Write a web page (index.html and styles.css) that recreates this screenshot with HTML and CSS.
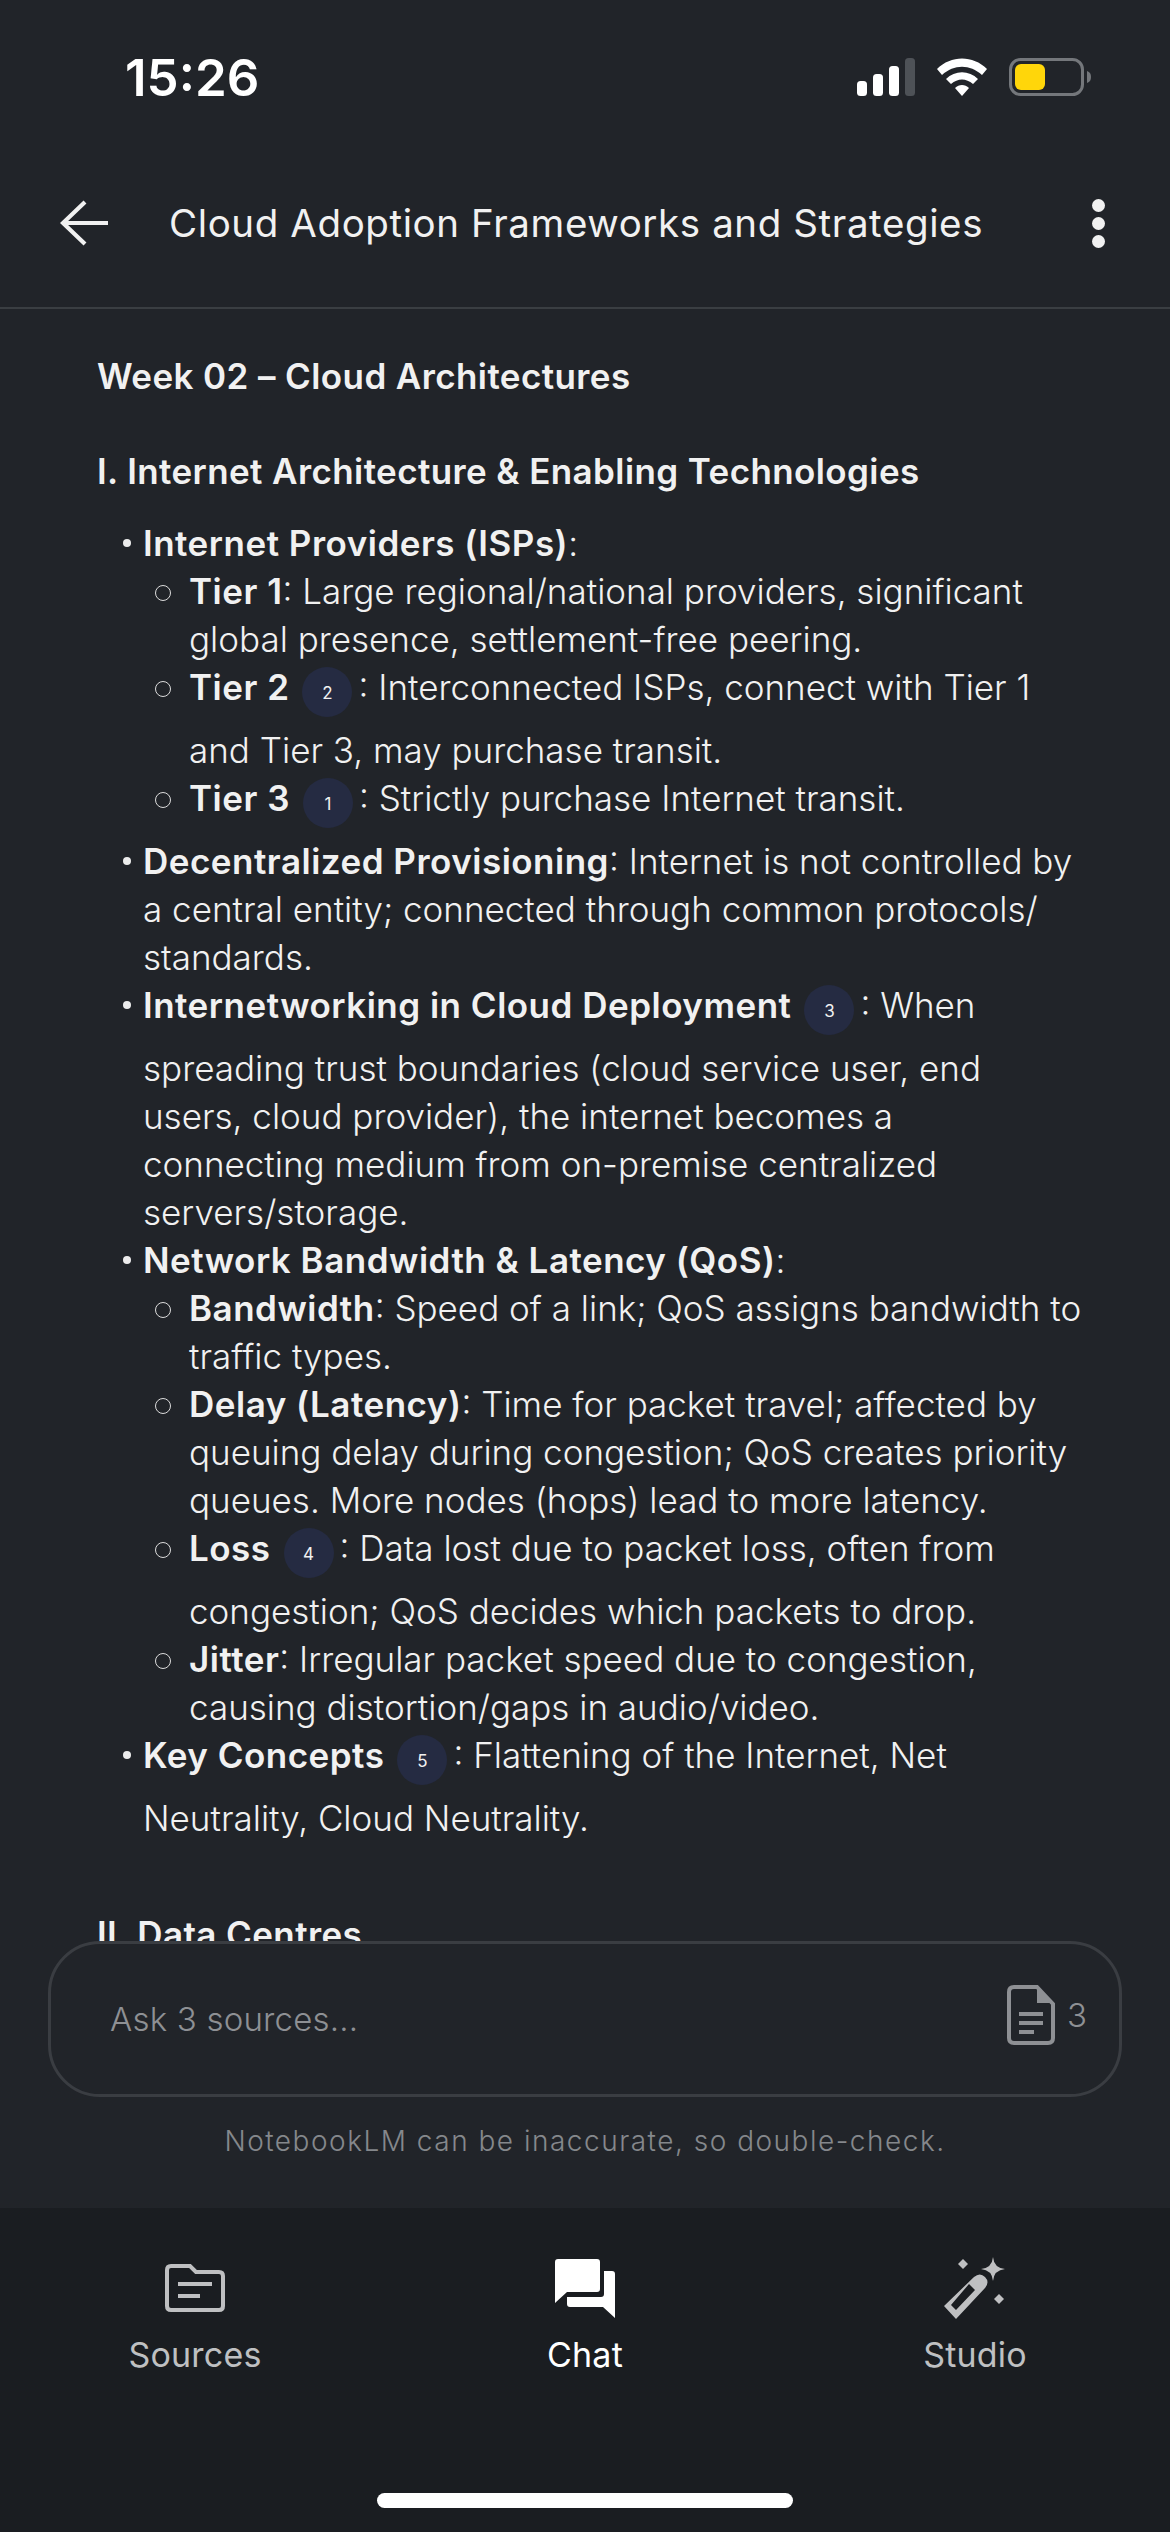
FILE: index.html
```html
<!DOCTYPE html>
<html lang="en">
<head>
    <meta charset="UTF-8">
    <title>Cloud Adoption Frameworks and Strategies</title>
    <meta name="viewport" content="width=device-width, initial-scale=1.0">
    <link rel="stylesheet" href="styles.css">
</head>
<body>
<div class="app">

    <!-- Status bar -->
    <div class="status-bar">
        <span class="time">15:26</span>
        <div class="status-icons">
            <svg width="58" height="38" viewBox="0 0 58 38">
                <rect x="0" y="23" width="10" height="15" rx="3.5" fill="#fff"/>
                <rect x="16" y="16" width="10" height="22" rx="3.5" fill="#fff"/>
                <rect x="32" y="8" width="10" height="30" rx="3.5" fill="#fff"/>
                <rect x="48" y="0" width="10" height="38" rx="3.5" fill="#4e5257"/>
            </svg>
            <svg width="50" height="38" viewBox="0 0 50 38">
                <path d="M0 11 C14 -3 36 -3 50 11 L45 17 C33 6 17 6 5 17 Z" fill="#fff"/>
                <path d="M9 21 C18 12 32 12 41 21 L36 26 C29 20 21 20 14 26 Z" fill="#fff"/>
                <path d="M18 30 C22 26 28 26 32 30 L25 38 Z" fill="#fff"/>
            </svg>
            <svg width="82" height="38" viewBox="0 0 82 38">
                <rect x="1.5" y="1.5" width="72" height="35" rx="10" fill="none" stroke="#74777b" stroke-width="3"/>
                <rect x="6" y="6" width="30" height="26" rx="6" fill="#ffd60a"/>
                <path d="M78 13 C81 14 82 16 82 19 C82 22 81 24 78 25 Z" fill="#74777b"/>
            </svg>
        </div>
    </div>

    <!-- Header -->
    <header class="top-bar">
        <svg class="back" width="50" height="46" viewBox="0 0 50 46">
            <path d="M25 2 L3 23 L25 44 M3 23 H48" fill="none" stroke="#f1f1f1" stroke-width="4.2"/>
        </svg>
        <h1>Cloud Adoption Frameworks and Strategies</h1>
        <div class="more"><i></i><i></i><i></i></div>
    </header>

    <!-- Notes -->
    <main class="note">
        <h2 class="week">Week 02 – Cloud Architectures</h2>
        <h3>I. Internet Architecture &amp; Enabling Technologies</h3>
        <ul class="lvl1">
            <li><b>Internet Providers (ISPs)</b>:
                <ul class="lvl2">
                    <li><b>Tier 1</b>: Large regional/national providers, significant global presence, settlement-free peering.</li>
                    <li><b>Tier 2</b><span class="cite">2</span>: Interconnected ISPs, connect with Tier 1 and Tier 3, may purchase transit.</li>
                    <li><b>Tier 3</b><span class="cite">1</span>: Strictly purchase Internet transit.</li>
                </ul>
            </li>
            <li><b>Decentralized Provisioning</b>: Internet is not controlled by a central entity; connected through common protocols/<br>standards.</li>
            <li><b>Internetworking in Cloud Deployment</b><span class="cite">3</span>: When spreading trust boundaries (cloud service user, end<br>users, cloud provider), the internet becomes a<br>connecting medium from on-premise centralized<br>servers/storage.</li>
            <li><b>Network Bandwidth &amp; Latency (QoS)</b>:
                <ul class="lvl2">
                    <li><b>Bandwidth</b>: Speed of a link; QoS assigns bandwidth to traffic types.</li>
                    <li><b>Delay (Latency)</b>: Time for packet travel; affected by queuing delay during congestion; QoS creates priority queues. More nodes (hops) lead to more latency.</li>
                    <li><b>Loss</b><span class="cite">4</span>: Data lost due to packet loss, often from congestion; QoS decides which packets to drop.</li>
                    <li><b>Jitter</b>: Irregular packet speed due to congestion, causing distortion/gaps in audio/video.</li>
                </ul>
            </li>
            <li><b>Key Concepts</b><span class="cite">5</span>: Flattening of the Internet, Net Neutrality, Cloud Neutrality.</li>
        </ul>
        <h3 class="next">II. Data Centres</h3>
    </main>

    <!-- Ask box -->
    <div class="ask">
        <span class="ask-text">Ask 3 sources...</span>
        <div class="ask-count">
            <svg width="48" height="60" viewBox="0 0 48 60">
                <path d="M7 2 H30 L46 19 V53 Q46 58 41 58 H7 Q2 58 2 53 V7 Q2 2 7 2 Z" fill="none" stroke="#8e9094" stroke-width="4"/>
                <path d="M30 2 V18 H46 Z" fill="#8e9094"/>
                <rect x="12" y="27" width="24" height="4" fill="#8e9094"/>
                <rect x="12" y="36" width="24" height="4" fill="#8e9094"/>
                <rect x="12" y="45" width="15" height="4" fill="#8e9094"/>
            </svg>
            <span>3</span>
        </div>
    </div>
    <p class="hint">NotebookLM can be inaccurate, so double-check.</p>

    <!-- Bottom nav -->
    <nav class="tabs">
        <div class="tab-row">
            <div class="tab">
                <div class="tab-icon">
                    <svg width="60" height="48" viewBox="0 0 60 48">
                        <path d="M6 2 H25 L31 8 H54 Q58 8 58 12 V42 Q58 46 54 46 H6 Q2 46 2 42 V6 Q2 2 6 2 Z" fill="none" stroke="#bfc0c2" stroke-width="4"/>
                        <rect x="13" y="18" width="34" height="4" fill="#bfc0c2"/>
                        <rect x="13" y="30" width="22" height="4" fill="#bfc0c2"/>
                    </svg>
                </div>
                <span>Sources</span>
            </div>
            <div class="tab active">
                <div class="tab-icon">
                    <svg width="60" height="59" viewBox="0 0 60 59">
                        <path d="M3 0 H42 Q45 0 45 3 V30 Q45 33 42 33 H12 L0 44 V3 Q0 0 3 0 Z" fill="#fff"/>
                        <path d="M49 12 H57 Q60 12 60 15 V59 L48 48 H15 Q12 48 12 45 V38 H46 Q49 38 49 35 Z" fill="#fff"/>
                    </svg>
                </div>
                <span>Chat</span>
            </div>
            <div class="tab">
                <div class="tab-icon">
                    <svg width="62" height="62" viewBox="0 0 62 62">
                        <path fill-rule="evenodd" d="M0 49 L12 62 L41 31 Q46 25 41 20 Q36 15 30 20 Z M7 48 L12 53 L31 33 L25 27 Z" fill="#bfc0c2"/>
                        <path d="M49 0 Q50 11 61 12 Q50 13 49 24 Q48 13 37 12 Q48 11 49 0 Z" fill="#bfc0c2"/>
                        <path d="M19 2 L24 7 L19 12 L14 7 Z" fill="#bfc0c2"/>
                        <path d="M55 37 L60 42 L55 47 L50 42 Z" fill="#bfc0c2"/>
                    </svg>
                </div>
                <span>Studio</span>
            </div>
        </div>
        <div class="home-bar"></div>
    </nav>
</div>
</body>
</html>
```

FILE: styles.css
```css
* {
    box-sizing: border-box;
}
html, body {
    margin: 0;
    padding: 0;
}
body {
    font-family: "Inter", "Open Sans", sans-serif;
    background-color: #212429;
    color: #f1f1f1;
}
.app {
    width: 1170px;
    height: 2532px;
    display: flex;
    flex-direction: column;
    overflow: hidden;
}

/* status bar */
.status-bar {
    height: 154px;
    padding: 48px 79px 0 125px;
    display: flex;
    justify-content: space-between;
    align-items: flex-start;
}
.time {
    font-size: 51px;
    font-weight: 600;
    line-height: 60px;
    color: #fff;
}
.status-icons {
    display: flex;
    align-items: center;
    gap: 22px;
    padding-top: 10px;
}

/* header */
.top-bar {
    height: 155px;
    display: flex;
    align-items: center;
    border-bottom: 2px solid #3a3e42;
    padding: 0 65px 15px 60px;
}
.top-bar h1 {
    flex: 1;
    margin: 0 0 0 59px;
    font-size: 38.5px;
    font-weight: 400;
    letter-spacing: 0.6px;
    color: #f1f1f1;
}
.more i {
    display: block;
    width: 13px;
    height: 13px;
    border-radius: 50%;
    background: #f1f1f1;
    margin: 5px 0;
}

/* notes */
.note {
    flex: 1;
    min-height: 0;
    overflow: hidden;
    padding: 43px 80px 0 97px;
    font-size: 35px;
    line-height: 48px;
    font-weight: 300;
    color: #f1f1f1;
}
.note h2, .note h3 {
    margin: 0;
    font-size: 35px;
    font-weight: 600;
    letter-spacing: 0.4px;
    line-height: 48px;
    color: #f1f1f1;
}
.note h3 {
    margin-top: 47px;
}
.note h3.next {
    margin-top: 68px;
}
.note b {
    font-weight: 600;
    letter-spacing: 0.5px;
    color: #f1f1f1;
}
.lvl1 {
    list-style: none;
    margin: 24px 0 0;
    padding: 0 0 0 46px;
}
.lvl1 > li {
    position: relative;
}
.lvl1 > li::before {
    content: "";
    position: absolute;
    left: -20px;
    top: 20px;
    width: 8px;
    height: 8px;
    border-radius: 50%;
    background: #ececec;
}
.lvl2 {
    list-style: none;
    margin: 0;
    padding: 0 0 0 46px;
}
.lvl2 > li {
    position: relative;
}
.lvl2 > li::before {
    content: "";
    position: absolute;
    left: -34px;
    top: 18px;
    width: 14px;
    height: 14px;
    border: 1.5px solid #dcdcdc;
    border-radius: 50%;
}
.cite {
    display: inline-flex;
    justify-content: center;
    align-items: center;
    width: 50px;
    height: 50px;
    margin: 4px 6px 9px 13px;
    padding-top: 2px;
    vertical-align: top;
    border-radius: 50%;
    background: #252b42;
    font-size: 17px;
    font-weight: 400;
    line-height: 20px;
    color: #f1f1f1;
}

/* ask box */
.ask {
    height: 156px;
    margin: 0 48px;
    padding: 0 32px 0 59px;
    display: flex;
    justify-content: space-between;
    align-items: center;
    border: 3px solid #3a3d42;
    border-radius: 52px;
    flex-shrink: 0;
}
.ask-text {
    font-size: 33px;
    letter-spacing: 0.2px;
    font-weight: 300;
    color: #8e9094;
}
.ask-count {
    display: flex;
    align-items: center;
    gap: 12px;
    font-size: 33px;
    font-weight: 300;
    color: #8e9094;
    padding-bottom: 8px;
}
.hint {
    margin: 0;
    height: 111px;
    padding-top: 24px;
    text-align: center;
    font-size: 28px;
    font-weight: 300;
    line-height: 40px;
    letter-spacing: 1.5px;
    color: #85888c;
    flex-shrink: 0;
}

/* bottom nav */
.tabs {
    height: 324px;
    background: #1a1d21;
    flex-shrink: 0;
    display: flex;
    flex-direction: column;
    align-items: center;
}
.tab-row {
    width: 100%;
    height: 285px;
    display: grid;
    grid-template-columns: 1fr 1fr 1fr;
}
.tab {
    display: flex;
    flex-direction: column;
    align-items: center;
    padding-top: 49px;
    color: #bfc0c2;
    font-size: 34px;
    letter-spacing: 0.2px;
    line-height: 44px;
}
.tab-icon {
    height: 62px;
    margin-bottom: 14px;
    display: flex;
    align-items: center;
}
.tab.active {
    color: #fff;
}
.home-bar {
    width: 416px;
    height: 15px;
    border-radius: 8px;
    background: #fff;
}
```
